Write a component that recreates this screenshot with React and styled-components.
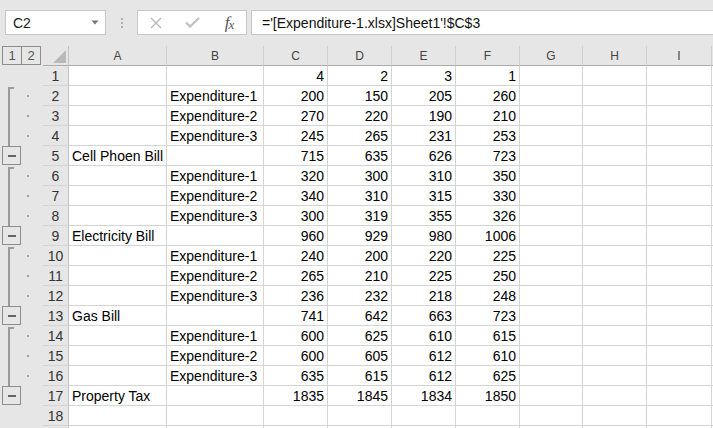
import React from 'react'
import styled, { createGlobalStyle } from 'styled-components'

const GlobalStyle = createGlobalStyle`
  html, body {
    margin: 0;
    padding: 0;
    background: #e6e6e6;
  }
  body {
    font-family: "Liberation Sans", Arial, sans-serif;
  }
`

const COLUMNS = [
  { key: 'A', width: 98 },
  { key: 'B', width: 97 },
  { key: 'C', width: 64, num: true },
  { key: 'D', width: 64, num: true },
  { key: 'E', width: 64, num: true },
  { key: 'F', width: 64, num: true },
  { key: 'G', width: 63 },
  { key: 'H', width: 64 },
  { key: 'I', width: 65 },
  { key: '', width: 80 },
]

// outline: start / mid / end of a group
const ROWS = [
  { n: 1, cells: ['', '', 4, 2, 3, 1] },
  { n: 2, o: 'start', cells: ['', 'Expenditure-1', 200, 150, 205, 260] },
  { n: 3, o: 'mid', cells: ['', 'Expenditure-2', 270, 220, 190, 210] },
  { n: 4, o: 'mid', cells: ['', 'Expenditure-3', 245, 265, 231, 253] },
  { n: 5, o: 'end', cells: ['Cell Phoen Bill', '', 715, 635, 626, 723] },
  { n: 6, o: 'start', cells: ['', 'Expenditure-1', 320, 300, 310, 350] },
  { n: 7, o: 'mid', cells: ['', 'Expenditure-2', 340, 310, 315, 330] },
  { n: 8, o: 'mid', cells: ['', 'Expenditure-3', 300, 319, 355, 326] },
  { n: 9, o: 'end', cells: ['Electricity Bill', '', 960, 929, 980, 1006] },
  { n: 10, o: 'start', cells: ['', 'Expenditure-1', 240, 200, 220, 225] },
  { n: 11, o: 'mid', cells: ['', 'Expenditure-2', 265, 210, 225, 250] },
  { n: 12, o: 'mid', cells: ['', 'Expenditure-3', 236, 232, 218, 248] },
  { n: 13, o: 'end', cells: ['Gas Bill', '', 741, 642, 663, 723] },
  { n: 14, o: 'start', cells: ['', 'Expenditure-1', 600, 625, 610, 615] },
  { n: 15, o: 'mid', cells: ['', 'Expenditure-2', 600, 605, 612, 610] },
  { n: 16, o: 'mid', cells: ['', 'Expenditure-3', 635, 615, 612, 625] },
  { n: 17, o: 'end', cells: ['Property Tax', '', 1835, 1845, 1834, 1850] },
  { n: 18, cells: [] },
  { n: '', cells: [] },
]

const Window = styled.div`
  width: 713px;
  height: 428px;
  overflow: hidden;
  background: #e6e6e6;
`

const FormulaBar = styled.div`
  display: flex;
  align-items: center;
  height: 46px;
  box-sizing: border-box;
  padding: 10px 0 11px 5px;
`

const Field = styled.div`
  height: 25px;
  box-sizing: border-box;
  background: #fff;
  border: 1px solid #c6c6c6;
  display: flex;
  align-items: center;
  font-size: 14px;
  color: #222;
`

const NameBox = styled(Field)`
  width: 101px;
  justify-content: space-between;
  padding: 0 6px 0 7px;
`

const Grip = styled.div`
  display: flex;
  flex-direction: column;
  gap: 2px;
  margin: 0 14px 0 15px;
  span {
    width: 2px;
    height: 2px;
    background: #b0b0b0;
  }
`

const ButtonGroup = styled(Field)`
  width: 110px;
  margin-right: 4px;
`

const IconButton = styled.div`
  flex: 1;
  height: 100%;
  display: flex;
  align-items: center;
  justify-content: center;
`

const Fx = styled.span`
  font-family: "Liberation Serif", "Times New Roman", serif;
  font-style: italic;
  color: #555;
  font-size: 17px;
  letter-spacing: -1px;
  margin-left: 2px;
  sub {
    font-size: 13px;
    vertical-align: baseline;
    position: relative;
    top: 1px;
  }
`

const FormulaInput = styled(Field)`
  flex: 1;
  margin-right: -20px;
  padding-left: 10px;
  color: #111;
`

const Sheet = styled.div`
  display: flex;
  flex-direction: column;
`

const Row = styled.div`
  display: flex;
  height: 20px;
`

const Gutter = styled.div`
  width: 43px;
  flex: none;
  display: flex;
`

const LevelButton = styled.div`
  width: 20px;
  height: 19px;
  box-sizing: border-box;
  border: 1px solid #8d8d8d;
  display: flex;
  align-items: center;
  justify-content: center;
  font-size: 13px;
  color: #555;
  & + & {
    margin-left: -1px;
  }
  &:first-child {
    margin-left: 2px;
  }
`

const BracketLane = styled.div`
  width: 23px;
  height: 100%;
`

const BracketLine = styled.div`
  margin-left: 8px;
  width: ${p => (p.$start ? '6px' : '0')};
  box-sizing: border-box;
  height: ${p => (p.$start ? '19px' : '20px')};
  margin-top: ${p => (p.$start ? '1px' : '0')};
  border-left: 2px solid #9a9a9a;
  border-top: ${p => (p.$start ? '2px solid #9a9a9a' : 'none')};
`

const Collapse = styled.div`
  margin-left: 2px;
  width: 19px;
  height: 19px;
  box-sizing: border-box;
  border: 1px solid #8d8d8d;
  display: flex;
  align-items: center;
  justify-content: center;
  &::before {
    content: '';
    width: 8px;
    height: 2px;
    background: #666;
  }
`

const Dot = styled.div`
  width: 2px;
  height: 2px;
  background: #a3a3a3;
  margin: 9px 0 0 4px;
`

const RowHeader = styled.div`
  width: 26px;
  flex: none;
  box-sizing: border-box;
  border-right: 1px solid #c2c2c2;
  border-bottom: 1px solid ${p => (p.$corner ? '#ababab' : '#d4d4d4')};
  font-size: 14px;
  color: #333;
  text-align: center;
  line-height: 18px;
  padding-top: 1px;
  svg {
    display: block;
  }
`

const ColHeader = styled.div`
  width: ${p => p.$w}px;
  flex: none;
  box-sizing: border-box;
  border-right: 1px solid #d0d0d0;
  border-bottom: 1px solid #ababab;
  display: flex;
  align-items: center;
  justify-content: center;
  font-size: 12px;
  color: #444;
`

const Cell = styled.div`
  width: ${p => p.$w}px;
  flex: none;
  box-sizing: border-box;
  background: #fff;
  border-right: 1px solid #d4d4d4;
  border-bottom: 1px solid #d4d4d4;
  padding: 1px 3px 0 3px;
  line-height: 18px;
  font-size: 14px;
  color: #000;
  white-space: nowrap;
  text-align: ${p => (p.$num ? 'right' : 'left')};
`

function Outline({ type }) {
  return (
    <Gutter>
      <BracketLane>
        {type === 'start' && <BracketLine $start />}
        {type === 'mid' && <BracketLine />}
        {type === 'end' && <Collapse />}
      </BracketLane>
      {(type === 'start' || type === 'mid') && <Dot />}
    </Gutter>
  )
}

export default function App() {
  return (
    <Window>
      <GlobalStyle />
      <FormulaBar>
        <NameBox>
          <span>C2</span>
          <svg width="8" height="5" viewBox="0 0 8 5">
            <polygon points="0.5,0.5 7.5,0.5 4,4.5" fill="#777" />
          </svg>
        </NameBox>
        <Grip>
          <span />
          <span />
          <span />
        </Grip>
        <ButtonGroup>
          <IconButton>
            <svg width="12" height="12" viewBox="0 0 12 12">
              <path d="M1 1 L11 11 M11 1 L1 11" stroke="#b9b9b9" strokeWidth="1.4" />
            </svg>
          </IconButton>
          <IconButton>
            <svg width="15" height="11" viewBox="0 0 15 11">
              <path d="M1 5.5 L5 9.5 L14 1" stroke="#c2c2c2" strokeWidth="2.4" fill="none" />
            </svg>
          </IconButton>
          <IconButton>
            <Fx>
              f<sub>x</sub>
            </Fx>
          </IconButton>
        </ButtonGroup>
        <FormulaInput>='[Expenditure-1.xlsx]Sheet1'!$C$3</FormulaInput>
      </FormulaBar>

      <Sheet>
        <Row>
          <Gutter>
            <LevelButton>1</LevelButton>
            <LevelButton>2</LevelButton>
          </Gutter>
          <RowHeader $corner>
            <svg width="25" height="18" viewBox="0 0 25 18">
              <polygon points="23,3 23,16 10,16" fill="#b9b9b9" />
            </svg>
          </RowHeader>
          {COLUMNS.map((c, i) => (
            <ColHeader key={i} $w={c.width}>
              {c.key}
            </ColHeader>
          ))}
        </Row>
        {ROWS.map((r, ri) => (
          <Row key={ri}>
            <Outline type={r.o} />
            <RowHeader>{r.n}</RowHeader>
            {COLUMNS.map((c, i) => (
              <Cell key={i} $w={c.width} $num={c.num}>
                {r.cells[i] ?? ''}
              </Cell>
            ))}
          </Row>
        ))}
      </Sheet>
    </Window>
  )
}
